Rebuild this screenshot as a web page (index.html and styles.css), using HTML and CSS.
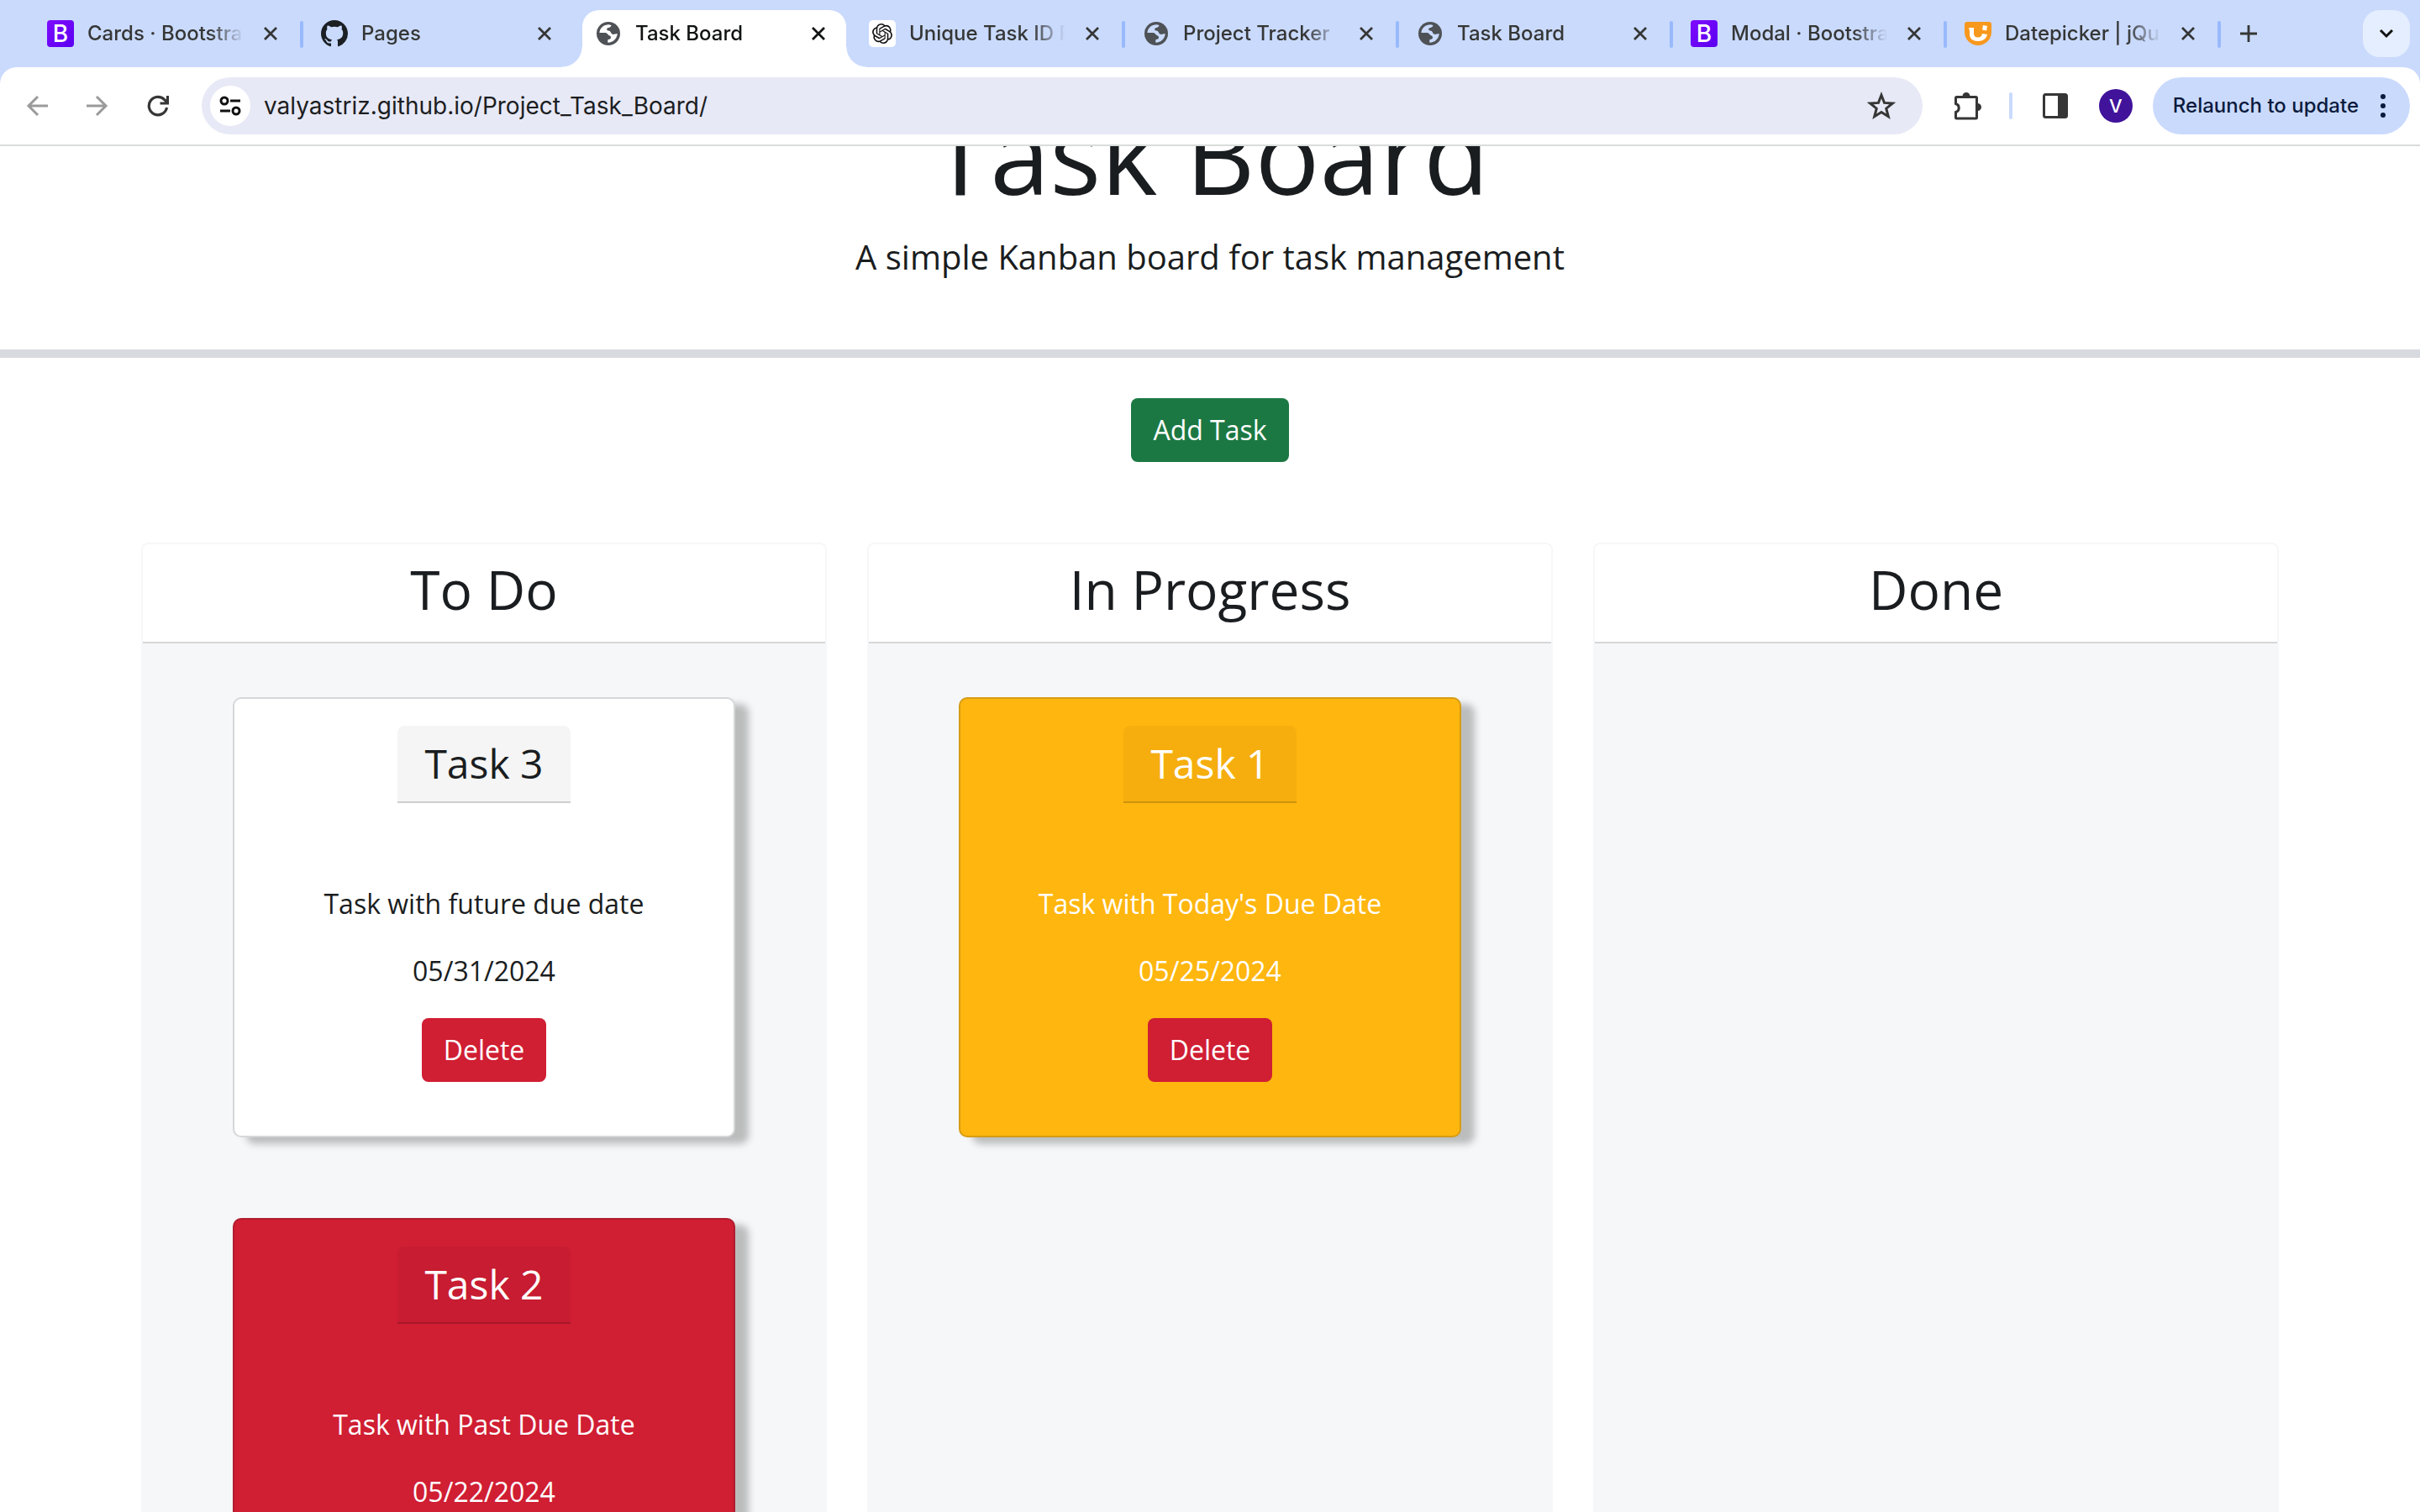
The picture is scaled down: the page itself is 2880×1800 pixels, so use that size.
FILE: index.html
```html
<!DOCTYPE html>
<html lang="en">
<head>
<meta charset="utf-8">
<meta name="viewport" content="width=device-width, initial-scale=1">
<title>Task Board</title>
<link rel="stylesheet" href="styles.css">
</head>
<body>
<svg class="sprite" aria-hidden="true">
  <symbol id="close" viewBox="0 0 16 16"><path d="M1 1 15 15M15 1 1 15" fill="none" stroke="currentColor" stroke-width="2.8"/></symbol>
  <symbol id="globe" viewBox="0 0 28 28"><circle cx="14" cy="14" r="14" fill="#4e5256"/><path class="land" d="M3.400 13C3.800 7.500 8.500 3.300 14.500 3.300L17.500 4C17.300 6 15.500 6.800 13.500 7.300C11.500 8 11.800 10.200 14 10.400C17.200 10.600 16.800 13.600 18.500 14.600C20 15.400 22 14.600 24.700 14C24.400 20 19.500 24.800 13.300 24.700V21.200C16 21.200 17.600 19.800 16.800 17.600C16.200 16 14.200 16.400 13.300 14.800C12.500 13.400 11 13 9 13Z"/></symbol>
</svg>

<header class="browser">
  <nav class="tabs" aria-label="Open tabs">
    <div class="tab">
      <span class="favicon bootstrap">B</span>
      <span class="tab-title">Cards · Bootstrap v5.3</span>
      <button class="close" aria-label="Close tab"><svg><use href="#close"/></svg></button>
    </div>
    <div class="tab before-active">
      <svg class="favicon" viewBox="0 0 16 16"><path fill="#1b1f24" d="M8 0C3.580 0 0 3.580 0 8c0 3.540 2.290 6.530 5.470 7.590.4.070.55-.17.55-.38 0-.19-.01-.82-.01-1.490-2.010.37-2.530-.49-2.690-.94-.09-.23-.48-.94-.82-1.130-.28-.15-.68-.52-.01-.53.63-.01 1.080.58 1.230.82.72 1.210 1.870.87 2.330.66.07-.52.28-.87.51-1.070-1.780-.2-3.640-.89-3.640-3.950 0-.87.31-1.590.82-2.150-.08-.2-.36-1.020.08-2.120 0 0 .67-.21 2.200.82.64-.18 1.320-.27 2-.27s1.360.09 2 .27c1.530-1.040 2.200-.82 2.200-.82.44 1.100.16 1.920.08 2.120.51.56.82 1.270.82 2.150 0 3.070-1.870 3.750-3.650 3.950.29.25.54.73.54 1.480 0 1.070-.01 1.930-.01 2.200 0 .21.15.46.55.38A8.010 8.010 0 0 0 16 8c0-4.420-3.580-8-8-8z"/></svg>
      <span class="tab-title">Pages</span>
      <button class="close" aria-label="Close tab"><svg><use href="#close"/></svg></button>
    </div>
    <div class="tab active">
      <svg class="favicon globe"><use href="#globe"/></svg>
      <span class="tab-title">Task Board</span>
      <button class="close" aria-label="Close tab"><svg><use href="#close"/></svg></button>
    </div>
    <div class="tab">
      <svg class="favicon" viewBox="0 0 32 32"><rect width="32" height="32" rx="5" fill="#fff"/><g transform="translate(4 4)"><path fill="#111" d="M22.280 9.820a5.980 5.980 0 0 0-.52-4.910 6.050 6.050 0 0 0-6.510-2.900A6.070 6.070 0 0 0 4.980 4.180a5.980 5.980 0 0 0-4 2.900 6.050 6.050 0 0 0 .74 7.100 5.980 5.980 0 0 0 .51 4.910 6.050 6.050 0 0 0 6.520 2.900A5.980 5.980 0 0 0 13.260 24a6.060 6.060 0 0 0 5.770-4.210 5.990 5.990 0 0 0 4-2.900 6.060 6.060 0 0 0-.75-7.070zm-9.020 12.610a4.480 4.480 0 0 1-2.880-1.040l.14-.08 4.780-2.760a.8.8 0 0 0 .39-.68v-6.740l2.020 1.170a.07.07 0 0 1 .04.05v5.580a4.500 4.500 0 0 1-4.490 4.500zm-9.660-4.130a4.470 4.470 0 0 1-.54-3.010l.14.09 4.780 2.760a.77.77 0 0 0 .78 0l5.840-3.370v2.330a.08.08 0 0 1-.03.06L9.740 19.950a4.500 4.500 0 0 1-6.140-1.650zM2.340 7.900a4.490 4.490 0 0 1 2.370-1.970v5.680a.77.77 0 0 0 .39.67l5.810 3.360-2.020 1.170a.08.08 0 0 1-.07 0L4 14.020A4.500 4.500 0 0 1 2.340 7.900zm16.600 3.860L13.100 8.360l2.020-1.160a.08.08 0 0 1 .07 0l4.830 2.790a4.490 4.490 0 0 1-.68 8.100v-5.680a.79.79 0 0 0-.4-.65zm2.010-3.020-.14-.09-4.770-2.780a.78.78 0 0 0-.79 0L9.410 9.230V6.900a.07.07 0 0 1 .03-.06l4.830-2.790a4.500 4.500 0 0 1 6.680 4.690zM8.310 12.860l-2.020-1.160a.08.08 0 0 1-.04-.06V6.070a4.500 4.500 0 0 1 7.380-3.450l-.14.08-4.780 2.760a.8.8 0 0 0-.4.680zm1.100-2.370 2.600-1.500 2.610 1.500v3l-2.600 1.500-2.610-1.500z"/></g></svg>
      <span class="tab-title">Unique Task ID Prompt</span>
      <button class="close" aria-label="Close tab"><svg><use href="#close"/></svg></button>
    </div>
    <div class="tab">
      <svg class="favicon globe"><use href="#globe"/></svg>
      <span class="tab-title">Project Tracker</span>
      <button class="close" aria-label="Close tab"><svg><use href="#close"/></svg></button>
    </div>
    <div class="tab">
      <svg class="favicon globe"><use href="#globe"/></svg>
      <span class="tab-title">Task Board</span>
      <button class="close" aria-label="Close tab"><svg><use href="#close"/></svg></button>
    </div>
    <div class="tab">
      <span class="favicon bootstrap">B</span>
      <span class="tab-title">Modal · Bootstrap v5.3</span>
      <button class="close" aria-label="Close tab"><svg><use href="#close"/></svg></button>
    </div>
    <div class="tab">
      <svg class="favicon" viewBox="0 0 32 32"><path d="M3 2h26a3 3 0 0 1 3 3v9a16 16 0 0 1-32 0V5a3 3 0 0 1 3-3z" fill="#f8981d"/><path d="M5 9h6v7c0 3 2 4.500 5 4.500s4.500-1.500 5-4.500l6 1c-1 5-5 8-11 8s-10-3-10-8v-4zM22 6l5 1-1 5.500-5-1z" fill="#fff"/></svg>
      <span class="tab-title">Datepicker | jQuery UI</span>
      <button class="close" aria-label="Close tab"><svg><use href="#close"/></svg></button>
    </div>
    <button class="new-tab" aria-label="New tab"><svg viewBox="0 0 20 20"><path d="M10 0v20M0 10h20" stroke="currentColor" stroke-width="2.800"/></svg></button>
    <button class="tab-search" aria-label="Search tabs"><svg viewBox="0 0 18 12"><path d="m2 2 7 7 7-7" fill="none" stroke="currentColor" stroke-width="3"/></svg></button>
  </nav>

  <div class="toolbar">
    <div class="history">
      <button class="muted" aria-label="Back"><svg viewBox="0 0 26 26"><path d="M26 13H3M14 2 3 13l11 11" fill="none" stroke="currentColor" stroke-width="3"/></svg></button>
      <button class="muted" aria-label="Forward"><svg viewBox="0 0 26 26"><path d="M0 13h23M12 2l11 11-11 11" fill="none" stroke="currentColor" stroke-width="3"/></svg></button>
      <button aria-label="Reload"><svg viewBox="0 0 26 26"><path d="M23.500 15A10.700 10.700 0 1 1 21 6l3 3M24.500 1v9h-9" fill="none" stroke="currentColor" stroke-width="3.200"/></svg></button>
    </div>
    <div class="omnibox">
      <button class="site-info" aria-label="View site information"><svg viewBox="0 0 26 24"><g fill="none" stroke="currentColor" stroke-width="3"><circle cx="6" cy="6" r="4"/><path d="M13 6h12M1 18h12"/><circle cx="20" cy="18" r="4"/></g></svg></button>
      <input class="url" type="text" aria-label="Address" value="valyastriz.github.io/Project_Task_Board/">
      <button class="star" aria-label="Bookmark this tab"><svg viewBox="0 0 32 32"><path d="m16 4 3.300 8.600 9.200.6-7.100 5.800 2.400 9-7.800-5-7.800 5 2.400-9-7.100-5.800 9.200-.6z" fill="none" stroke="currentColor" stroke-width="2.800"/></svg></button>
    </div>
    <div class="tools">
      <button aria-label="Extensions"><svg class="puzzle" viewBox="0 0 34 34"><path d="M4.500 6.500h23a1 1 0 0 1 1 1V31a1 1 0 0 1-1 1h-23a1 1 0 0 1-1-1v-6.500c5-1.500 5-8.500 0-10V7.500a1 1 0 0 1 1-1z" fill="none" stroke="currentColor" stroke-width="3"/><path d="M11.500 5.500a4.500 4.500 0 0 1 9 0zM29.500 14a4.500 4.500 0 0 1 0 9z" fill="currentColor"/></svg></button>
      <span class="divider"></span>
      <button aria-label="Side panel"><svg class="panel" viewBox="0 0 30 30"><rect x="1.500" y="1.500" width="27" height="27" rx="2" fill="none" stroke="currentColor" stroke-width="3"/><path d="M18 1h10v28H18z" fill="currentColor"/></svg></button>
      <button class="avatar" aria-label="Profile">V</button>
      <button class="relaunch">Relaunch to update<svg viewBox="0 0 8 28"><g fill="currentColor"><circle cx="4" cy="3" r="3"/><circle cx="4" cy="14" r="3"/><circle cx="4" cy="25" r="3"/></g></svg></button>
    </div>
  </div>
</header>

<div class="page">
  <div class="page-scroll">
    <header class="hero">
      <h1>Task Board</h1>
      <p>A simple Kanban board for task management</p>
    </header>
    <div class="actions"><button class="btn btn-success">Add Task</button></div>
    <main class="board">
      <section class="lane">
        <h2>To Do</h2>
        <div class="lane-body">
          <article class="task">
            <h3>Task 3</h3>
            <p>Task with future due date</p>
            <p>05/31/2024</p>
            <button class="btn btn-danger">Delete</button>
          </article>
          <article class="task overdue">
            <h3>Task 2</h3>
            <p>Task with Past Due Date</p>
            <p>05/22/2024</p>
            <button class="btn btn-danger">Delete</button>
          </article>
        </div>
      </section>
      <section class="lane">
        <h2>In Progress</h2>
        <div class="lane-body">
          <article class="task due-today">
            <h3>Task 1</h3>
            <p>Task with Today's Due Date</p>
            <p>05/25/2024</p>
            <button class="btn btn-danger">Delete</button>
          </article>
        </div>
      </section>
      <section class="lane">
        <h2>Done</h2>
        <div class="lane-body"></div>
      </section>
    </main>
  </div>
</div>
</body>
</html>
```
FILE: styles.css
```css
* { box-sizing: border-box; }
body {
  margin: 0;
  height: 100vh;
  display: flex;
  flex-direction: column;
  overflow: hidden;
  background: #fff;
  color: #1a1d20;
  font-family: "Open Sans", sans-serif;
  font-size: 32px;
  line-height: 48px;
}
h1, h2, h3, p { margin: 0; font-weight: 400; }
button, input { font: inherit; color: inherit; border: 0; padding: 0; background: none; }
svg { display: block; flex: none; }
.sprite { position: absolute; width: 0; height: 0; }

/* Browser frame */
.browser {
  --strip: #cadafd;
  flex: none;
  background: var(--strip);
  color: #353635;
  font-family: Inter, sans-serif;
  font-size: 24px;
  font-weight: 500;
  line-height: 32px;
}
.tabs { display: flex; align-items: center; height: 80px; padding: 0 12px 0 35px; }
.tab {
  position: relative;
  flex: 0 1 326px;
  min-width: 0;
  height: 80px;
  display: flex;
  align-items: center;
  gap: 16px;
  padding: 0 31px 0 21px;
}
.tab::after {
  content: "";
  position: absolute;
  right: 0;
  top: 25px;
  width: 4px;
  height: 32px;
  border-radius: 2px;
  background: #98b9fb;
}
.tab.before-active::after { display: none; }
.tab.active { --strip: #fff; color: #111312; z-index: 1; }
.tab.active::before {
  content: "";
  position: absolute;
  inset: 12px 6px 0 6px;
  border-radius: 20px 20px 0 0;
  background: #fff;
}
/* Flared feet of the active tab */
.tab.active::after {
  top: auto;
  bottom: 0;
  left: -18px;
  right: -18px;
  width: auto;
  height: 24px;
  border-radius: 0;
  background:
    radial-gradient(circle at 0 0, transparent 23px, #fff 24px) left / 24px 24px no-repeat,
    radial-gradient(circle at 100% 0, transparent 23px, #fff 24px) right / 24px 24px no-repeat;
}
.tab > * { position: relative; z-index: 1; }
.land { fill: var(--strip); }
.favicon { flex: none; width: 32px; height: 32px; }
.favicon.globe { padding: 2px; }
.favicon.bootstrap {
  border-radius: 4px;
  background: linear-gradient(135deg, #7f0bfd, #5a00f0);
  color: #fff;
  font-size: 28px;
  text-align: center;
}
.tab-title {
  flex: 1;
  min-width: 0;
  overflow: hidden;
  white-space: nowrap;
  -webkit-mask-image: linear-gradient(to left, transparent, #000 40px);
  mask-image: linear-gradient(to left, transparent, #000 40px);
}
.close { flex: none; margin-left: 8px; }
.close svg { width: 16px; height: 16px; }
.new-tab { margin-left: 23px; }
.new-tab svg { width: 20px; height: 20px; }
.tab-search {
  margin-left: auto;
  width: 56px;
  height: 56px;
  display: grid;
  place-items: center;
  border-radius: 20px;
  background: #e5eefe;
  color: #111;
}
.tab-search svg { width: 18px; height: 12px; }

.toolbar {
  display: flex;
  align-items: center;
  height: 94px;
  padding: 0 12px 0 31px;
  border-bottom: 2px solid #d8dcdb;
  border-radius: 20px 20px 0 0;
  background: #fff;
}
.history { display: flex; gap: 46px; width: 209px; }
.history svg { width: 26px; height: 26px; }
.muted { color: #9a9a9a; }
.omnibox {
  flex: 1;
  display: flex;
  align-items: center;
  height: 68px;
  padding: 0 32px 0 10px;
  border-radius: 34px;
  background: #e7e9f6;
}
.site-info {
  width: 48px;
  height: 48px;
  display: grid;
  place-items: center;
  border-radius: 50%;
  background: #fff;
  color: #111;
}
.site-info svg { width: 26px; height: 24px; }
.url { flex: 1; margin-left: 16px; height: 40px; font-size: 28px; font-weight: 400; color: #1c1d1f; }
.star svg { width: 34px; height: 34px; }
.tools { display: flex; align-items: center; margin-left: 36px; }
.puzzle { width: 34px; height: 34px; }
.divider { width: 4px; height: 32px; margin: 0 36px 0 33px; border-radius: 2px; background: #cadafd; }
.panel { width: 30px; height: 30px; }
.avatar {
  width: 40px;
  height: 40px;
  margin: 0 24px 0 37px;
  border-radius: 50%;
  background: #40139a;
  color: #fff;
  font-size: 22px;
}
.relaunch {
  display: flex;
  align-items: center;
  gap: 25px;
  height: 68px;
  padding: 0 28px 0 24px;
  border-radius: 34px;
  background: #cadafd;
  color: #0a1a3c;
  white-space: nowrap;
}
.relaunch svg { width: 8px; height: 28px; }

/* Task board page, scrolled down past the top of its heading */
.page { flex: 1; min-height: 0; overflow: hidden; }
.page-scroll { margin-top: -116px; }
.hero { padding: 48px 48px 80px; border-bottom: 10px solid #d7dade; text-align: center; }
.hero h1 { margin-bottom: 16px; font-size: 128px; line-height: 154px; }
.hero p { font-size: 40px; line-height: 60px; }
.actions { display: flex; justify-content: center; padding: 48px 0 96px; }
.btn { height: 76px; padding: 0 26px; border-radius: 8px; color: #fff; }
.btn-success { background: #1c7843; }
.btn-danger { background: #d01e33; }
.board {
  display: grid;
  grid-template-columns: repeat(3, 1fr);
  gap: 48px;
  max-width: 2640px;
  margin: 0 auto;
  padding: 0 48px 96px;
}
.lane { border: 2px solid #f6f7f9; border-radius: 8px; background: #f6f7f9; }
.lane h2 {
  padding: 16px 32px 24px;
  border-bottom: 2px solid #d5d7d9;
  border-radius: 6px 6px 0 0;
  background: #fff;
  font-size: 64px;
  line-height: 76px;
  text-align: center;
}
.lane-body { display: flex; flex-direction: column; align-items: center; gap: 96px; padding: 64px 32px; }
.task {
  width: 80%;
  display: flex;
  flex-direction: column;
  align-items: center;
  gap: 32px;
  padding: 32px 32px 64px;
  border: 2px solid #d6d7d8;
  border-radius: 10px;
  background: #fff;
  box-shadow: 16px 8px 8px #bbbdbd;
}
.task h3 {
  margin-bottom: 64px;
  padding: 16px 32px;
  border-bottom: 2px solid rgba(0, 0, 0, .16);
  border-radius: 8px 8px 0 0;
  background: rgba(0, 0, 0, .04);
  font-size: 48px;
  line-height: 58px;
}
.overdue { border-color: #b01d2f; background: #d01e33; color: #fff; }
.due-today { border-color: #d69c14; background: #ffb60f; color: #fff; }
```
